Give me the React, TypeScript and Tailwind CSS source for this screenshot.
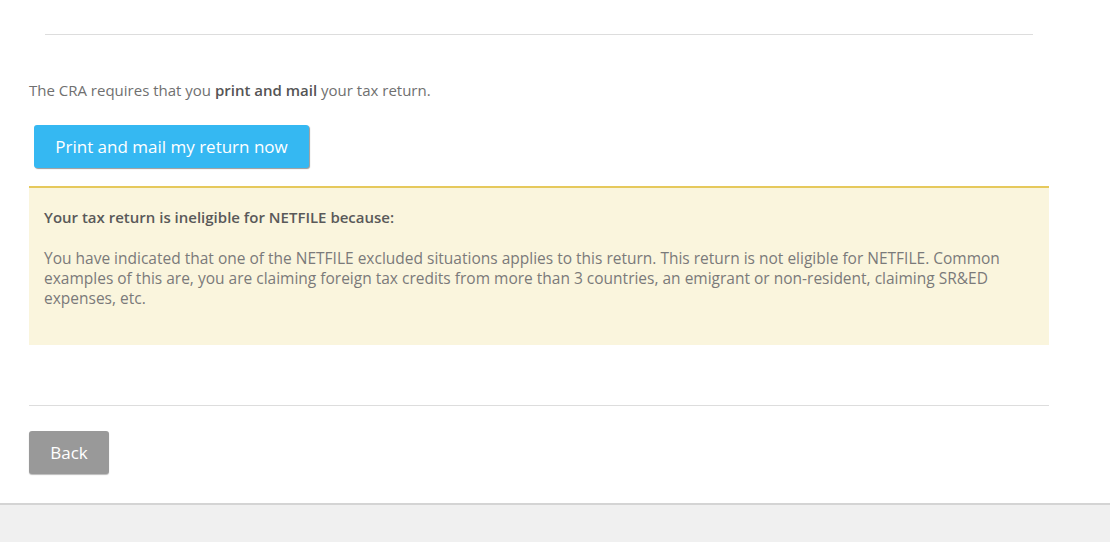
export default function App() {
  return (
    <div className="flex h-[542px] w-[1110px] flex-col overflow-hidden bg-white font-['Open_Sans','Liberation_Sans',sans-serif] text-[#666]">
      <div className="flex-1">
        <div className="ml-[29px] w-[1020px]">
          {/* heading cut off above */}
          <div className="px-4 pt-[34px]">
            <div className="h-px bg-[#dddddd]" />
          </div>

          <p className="mt-[45px] text-[15px] leading-5 text-[#707070]">
            The CRA requires that you <b className="font-semibold text-[#555]">print and mail</b> your tax return.
          </p>

          <button className="ml-[5px] mt-[25px] h-[43px] w-[275px] rounded-[3px] bg-[#35b8f2] text-[17px] text-white shadow-[1px_1px_1px_#9a9a9a]">
            Print and mail my return now
          </button>

          <div className="mt-[18px] h-[159px] border-t-2 border-[#e6c95c] bg-[#faf5dd] px-[15px] pt-[19px]">
            <p className="text-[15px] font-semibold leading-5 text-[#595959]">
              Your tax return is ineligible for NETFILE because:
            </p>
            <p className="mt-[21px] text-[15.5px] leading-5 text-[#7a7a7a]">
              You have indicated that one of the NETFILE excluded situations applies to this return. This return is not eligible for NETFILE. Common examples of this are, you are claiming foreign tax credits from more than 3 countries, an emigrant or non-resident, claiming SR&amp;ED expenses, etc.
            </p>
          </div>

          <div className="mt-[60px] h-px bg-[#dddddd]" />

          <button className="mt-[25px] h-[43px] w-[80px] rounded-[3px] bg-[#999999] text-[17px] text-white shadow-[0_1px_1px_#bbbbbb]">
            Back
          </button>
        </div>
      </div>
      <div className="h-[39px] border-t-2 border-[#d4d4d4] bg-[#f0f0f0]" />
    </div>
  )
}
